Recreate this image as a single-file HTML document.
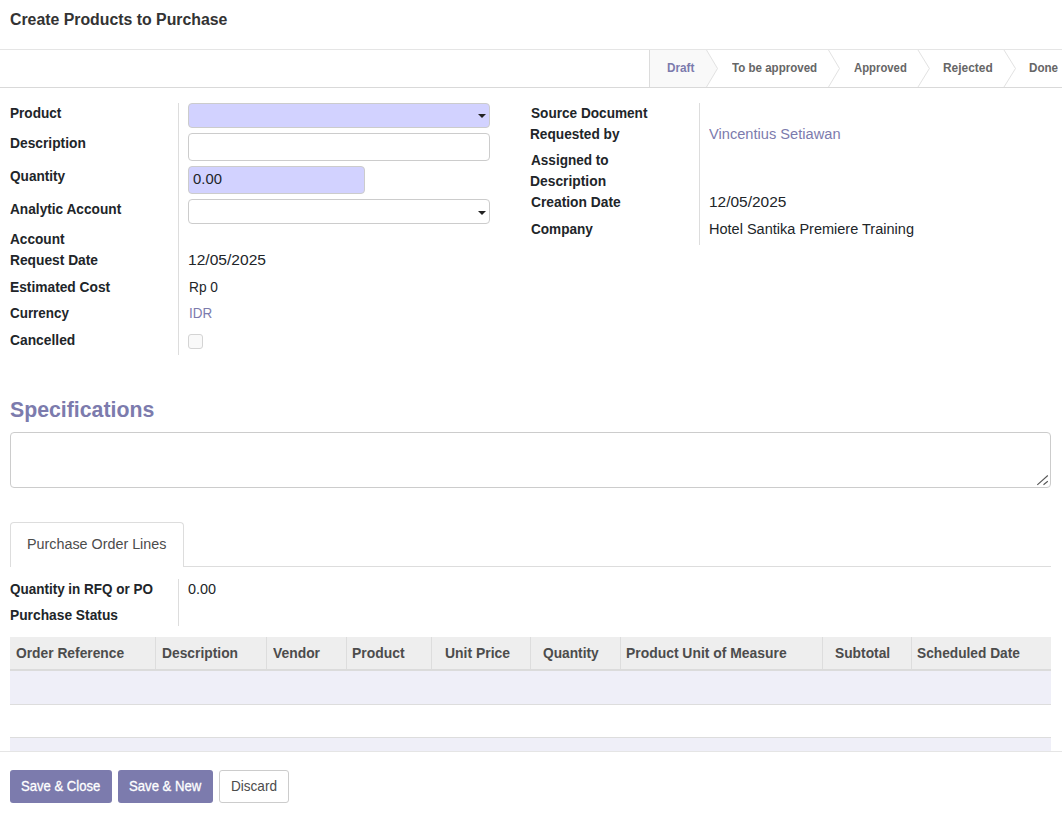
<!DOCTYPE html>
<html lang="en"><head><meta charset="utf-8"><title>Create Products to Purchase</title>
<style>
html,body{margin:0;padding:0;background:#fff;}
body{width:1062px;height:814px;position:relative;overflow:hidden;font-family:"Liberation Sans",sans-serif;}
.t{position:absolute;margin:0;padding:0;white-space:nowrap;display:inline-block;transform-origin:0 50%;}
.a{position:absolute;box-sizing:border-box;}
#b1,#b2{-webkit-text-stroke:0.3px #fff;}
</style></head><body>
<div class="a" style="left:0;top:49px;width:1062px;height:1px;background:#e5e5e5"></div>
<div class="a" style="left:0;top:87px;width:1062px;height:1px;background:#d9d9d9"></div>
<svg class="a" style="left:640px;top:49px" width="422" height="39" viewBox="640 49 422 39">
<polygon points="649.5,50 706.5,50 717.5,68.5 706.5,87 649.5,87" fill="#f9f9f9"/>
<path d="M649.5 50V87" stroke="#dcdcdc" fill="none"/>
<path d="M706.5 50L717.5 68.5L706.5 87 M828.5 50L839.5 68.5L828.5 87 M918 50L929.4 68.5L918 87 M1004 50L1015.5 68.5L1004 87" stroke="#e2e2e2" fill="none"/>
</svg>
<div class="a" style="left:178px;top:103px;width:1px;height:252px;background:#dddddd"></div>
<div class="a" style="left:699px;top:103px;width:1px;height:142px;background:#dddddd"></div>
<div class="a" style="left:178px;top:579px;width:1px;height:47px;background:#dddddd"></div>
<div class="a" style="left:188px;top:103px;width:302px;height:25px;background:#d2d2ff;border:1px solid #cccccc;border-radius:4px"></div>
<div class="a" style="left:188px;top:133px;width:302px;height:28px;background:#fff;border:1px solid #cccccc;border-radius:4px"></div>
<div class="a" style="left:188px;top:166px;width:177px;height:28px;background:#d2d2ff;border:1px solid #cccccc;border-radius:4px"></div>
<div class="a" style="left:188px;top:199px;width:302px;height:25px;background:#fff;border:1px solid #cccccc;border-radius:4px"></div>
<svg class="a" style="left:476px;top:112px" width="12" height="8" viewBox="476 112 12 8"><polygon points="478,114 486,114 482,118.1" fill="#222"/></svg>
<svg class="a" style="left:476px;top:209px" width="12" height="8" viewBox="476 209 12 8"><polygon points="478,211 486,211 482,215.1" fill="#222"/></svg>
<div class="a" style="left:188px;top:334px;width:15px;height:15px;background:#f9f9f9;border:1px solid #d4d4d4;border-radius:3px"></div>
<div class="a" style="left:10px;top:432px;width:1041px;height:56px;background:#fff;border:1px solid #cccccc;border-radius:4px"></div>
<svg class="a" style="left:1034px;top:472px" width="16" height="16" viewBox="1034 472 16 16"><path d="M1037.3 484.8L1047.8 475.5M1043.5 484.8L1047.8 481.3" stroke="#555" stroke-width="1.1" fill="none"/></svg>
<div class="a" style="left:10px;top:566px;width:1041px;height:1px;background:#dddddd"></div>
<div class="a" style="left:10px;top:522px;width:174px;height:45px;background:#fff;border:1px solid #dddddd;border-bottom:none;border-radius:4px 4px 0 0"></div>
<div class="a" style="left:10px;top:637px;width:1041px;height:32px;background:#eeeeee"></div>
<div class="a" style="left:10px;top:669px;width:1041px;height:2px;background:#dbdbdb"></div>
<div class="a" style="left:155px;top:637px;width:1px;height:32px;background:#dddddd"></div>
<div class="a" style="left:266px;top:637px;width:1px;height:32px;background:#dddddd"></div>
<div class="a" style="left:346px;top:637px;width:1px;height:32px;background:#dddddd"></div>
<div class="a" style="left:431px;top:637px;width:1px;height:32px;background:#dddddd"></div>
<div class="a" style="left:530px;top:637px;width:1px;height:32px;background:#dddddd"></div>
<div class="a" style="left:620px;top:637px;width:1px;height:32px;background:#dddddd"></div>
<div class="a" style="left:822px;top:637px;width:1px;height:32px;background:#dddddd"></div>
<div class="a" style="left:911px;top:637px;width:1px;height:32px;background:#dddddd"></div>
<div class="a" style="left:10px;top:671px;width:1041px;height:33px;background:#efeff8"></div>
<div class="a" style="left:10px;top:704px;width:1041px;height:1px;background:#dddddd"></div>
<div class="a" style="left:10px;top:737px;width:1041px;height:1px;background:#dddddd"></div>
<div class="a" style="left:10px;top:738px;width:1041px;height:13px;background:#efeff8"></div>
<div class="a" style="left:0;top:751px;width:1062px;height:63px;background:#fff;border-top:1px solid #e5e5e5"></div>
<div class="a" style="left:10px;top:770px;width:102px;height:33px;background:#7c7bad;border-radius:3px"></div>
<div class="a" style="left:118px;top:770px;width:95px;height:33px;background:#7c7bad;border-radius:3px"></div>
<div class="a" style="left:219px;top:770px;width:70px;height:33px;background:#fff;border:1px solid #cccccc;border-radius:3px"></div>
<h4 class="t" id="title" style="left:9.63px;top:12.46px;font-size:16px;line-height:16px;font-weight:bold;color:#333333;transform:scaleX(0.9898)">Create Products to Purchase</h4>
<span class="t" id="sb1" style="left:666.79px;top:61.00px;font-size:13px;line-height:13px;font-weight:bold;color:#7c7bad;transform:scaleX(0.9045)">Draft</span>
<span class="t" id="sb2" style="left:732.00px;top:61.00px;font-size:13px;line-height:13px;font-weight:bold;color:#666666;transform:scaleX(0.8887)">To be approved</span>
<span class="t" id="sb3" style="left:854.00px;top:61.00px;font-size:13px;line-height:13px;font-weight:bold;color:#666666;transform:scaleX(0.8705)">Approved</span>
<span class="t" id="sb4" style="left:943.21px;top:61.00px;font-size:13px;line-height:13px;font-weight:bold;color:#666666;transform:scaleX(0.9177)">Rejected</span>
<span class="t" id="sb5" style="left:1028.79px;top:61.00px;font-size:13px;line-height:13px;font-weight:bold;color:#666666;transform:scaleX(0.8948)">Done</span>
<label class="t" id="l1" style="left:9.83px;top:104.88px;font-size:15.5px;line-height:15.5px;font-weight:bold;color:#212529;transform:scaleX(0.8775)">Product</label>
<label class="t" id="l2" style="left:9.85px;top:134.88px;font-size:15.5px;line-height:15.5px;font-weight:bold;color:#212529;transform:scaleX(0.8903)">Description</label>
<label class="t" id="l3" style="left:10.02px;top:167.88px;font-size:15.5px;line-height:15.5px;font-weight:bold;color:#212529;transform:scaleX(0.8776)">Quantity</label>
<label class="t" id="l4" style="left:9.84px;top:200.88px;font-size:15.5px;line-height:15.5px;font-weight:bold;color:#212529;transform:scaleX(0.8822)">Analytic Account</label>
<label class="t" id="l5" style="left:9.68px;top:230.88px;font-size:15.5px;line-height:15.5px;font-weight:bold;color:#212529;transform:scaleX(0.8805)">Account</label>
<label class="t" id="l6" style="left:9.64px;top:251.88px;font-size:15.5px;line-height:15.5px;font-weight:bold;color:#212529;transform:scaleX(0.8885)">Request Date</label>
<label class="t" id="l7" style="left:9.61px;top:278.88px;font-size:15.5px;line-height:15.5px;font-weight:bold;color:#212529;transform:scaleX(0.8879)">Estimated Cost</label>
<label class="t" id="l8" style="left:9.88px;top:304.88px;font-size:15.5px;line-height:15.5px;font-weight:bold;color:#212529;transform:scaleX(0.8654)">Currency</label>
<label class="t" id="l9" style="left:9.57px;top:331.88px;font-size:15.5px;line-height:15.5px;font-weight:bold;color:#212529;transform:scaleX(0.8918)">Cancelled</label>
<span class="t" id="v3" style="left:192.90px;top:170.88px;font-size:15.5px;line-height:15.5px;font-weight:normal;color:#212529;transform:scaleX(0.9575)">0.00</span>
<span class="t" id="v6" style="left:187.92px;top:251.88px;font-size:15.5px;line-height:15.5px;font-weight:normal;color:#212529;transform:scaleX(1.0052)">12/05/2025</span>
<span class="t" id="v7" style="left:188.50px;top:278.88px;font-size:15.5px;line-height:15.5px;font-weight:normal;color:#212529;transform:scaleX(0.8853)">Rp 0</span>
<span class="t" id="v8" style="left:188.65px;top:304.88px;font-size:15.5px;line-height:15.5px;font-weight:normal;color:#7c7bad;transform:scaleX(0.8705)">IDR</span>
<label class="t" id="r1" style="left:530.59px;top:104.88px;font-size:15.5px;line-height:15.5px;font-weight:bold;color:#212529;transform:scaleX(0.8781)">Source Document</label>
<label class="t" id="r2" style="left:530.30px;top:125.88px;font-size:15.5px;line-height:15.5px;font-weight:bold;color:#212529;transform:scaleX(0.8807)">Requested by</label>
<label class="t" id="r3" style="left:530.84px;top:151.88px;font-size:15.5px;line-height:15.5px;font-weight:bold;color:#212529;transform:scaleX(0.8753)">Assigned to</label>
<label class="t" id="r4" style="left:530.29px;top:172.88px;font-size:15.5px;line-height:15.5px;font-weight:bold;color:#212529;transform:scaleX(0.8927)">Description</label>
<label class="t" id="r5" style="left:530.89px;top:193.88px;font-size:15.5px;line-height:15.5px;font-weight:bold;color:#212529;transform:scaleX(0.8903)">Creation Date</label>
<label class="t" id="r6" style="left:530.51px;top:220.88px;font-size:15.5px;line-height:15.5px;font-weight:bold;color:#212529;transform:scaleX(0.8768)">Company</label>
<span class="t" id="rv2" style="left:709.24px;top:125.88px;font-size:15.5px;line-height:15.5px;font-weight:normal;color:#7c7bad;transform:scaleX(0.9442)">Vincentius Setiawan</span>
<span class="t" id="rv5" style="left:709.24px;top:193.88px;font-size:15.5px;line-height:15.5px;font-weight:normal;color:#212529;transform:scaleX(0.9981)">12/05/2025</span>
<span class="t" id="rv6" style="left:708.70px;top:220.88px;font-size:15.5px;line-height:15.5px;font-weight:normal;color:#212529;transform:scaleX(0.9366)">Hotel Santika Premiere Training</span>
<h2 class="t" id="spec" style="left:9.75px;top:397.62px;font-size:22.9px;line-height:22.9px;font-weight:bold;color:#7c7bad;transform:scaleX(0.9293)">Specifications</h2>
<span class="t" id="tab" style="left:27.15px;top:535.88px;font-size:15.5px;line-height:15.5px;font-weight:normal;color:#4c4c4c;transform:scaleX(0.9247)">Purchase Order Lines</span>
<label class="t" id="q1" style="left:9.65px;top:580.88px;font-size:15.5px;line-height:15.5px;font-weight:bold;color:#212529;transform:scaleX(0.8690)">Quantity in RFQ or PO</label>
<label class="t" id="q2" style="left:9.82px;top:606.88px;font-size:15.5px;line-height:15.5px;font-weight:bold;color:#212529;transform:scaleX(0.8890)">Purchase Status</label>
<span class="t" id="qv" style="left:188.27px;top:580.88px;font-size:15.5px;line-height:15.5px;font-weight:normal;color:#212529;transform:scaleX(0.9292)">0.00</span>
<span class="t" id="h1" style="left:16.43px;top:644.88px;font-size:15.5px;line-height:15.5px;font-weight:bold;color:#4c4c4c;transform:scaleX(0.8901)">Order Reference</span>
<span class="t" id="h2" style="left:161.63px;top:644.88px;font-size:15.5px;line-height:15.5px;font-weight:bold;color:#4c4c4c;transform:scaleX(0.8916)">Description</span>
<span class="t" id="h3" style="left:272.68px;top:644.88px;font-size:15.5px;line-height:15.5px;font-weight:bold;color:#4c4c4c;transform:scaleX(0.8947)">Vendor</span>
<span class="t" id="h4" style="left:352.34px;top:644.88px;font-size:15.5px;line-height:15.5px;font-weight:bold;color:#4c4c4c;transform:scaleX(0.8972)">Product</span>
<span class="t" id="h5" style="left:444.78px;top:644.88px;font-size:15.5px;line-height:15.5px;font-weight:bold;color:#4c4c4c;transform:scaleX(0.8992)">Unit Price</span>
<span class="t" id="h6" style="left:542.97px;top:644.88px;font-size:15.5px;line-height:15.5px;font-weight:bold;color:#4c4c4c;transform:scaleX(0.8862)">Quantity</span>
<span class="t" id="h7" style="left:625.63px;top:644.88px;font-size:15.5px;line-height:15.5px;font-weight:bold;color:#4c4c4c;transform:scaleX(0.8967)">Product Unit of Measure</span>
<span class="t" id="h8" style="left:834.64px;top:644.88px;font-size:15.5px;line-height:15.5px;font-weight:bold;color:#4c4c4c;transform:scaleX(0.8897)">Subtotal</span>
<span class="t" id="h9" style="left:917.44px;top:644.88px;font-size:15.5px;line-height:15.5px;font-weight:bold;color:#4c4c4c;transform:scaleX(0.8852)">Scheduled Date</span>
<span class="t" id="b1" style="left:21.15px;top:778.73px;font-size:14.5px;line-height:14.5px;font-weight:normal;color:#ffffff;transform:scaleX(0.9033)">Save &amp; Close</span>
<span class="t" id="b2" style="left:129.27px;top:778.73px;font-size:14.5px;line-height:14.5px;font-weight:normal;color:#ffffff;transform:scaleX(0.9065)">Save &amp; New</span>
<span class="t" id="b3" style="left:230.80px;top:778.73px;font-size:14.5px;line-height:14.5px;font-weight:normal;color:#4c4c4c;transform:scaleX(0.9349)">Discard</span>
</body></html>
